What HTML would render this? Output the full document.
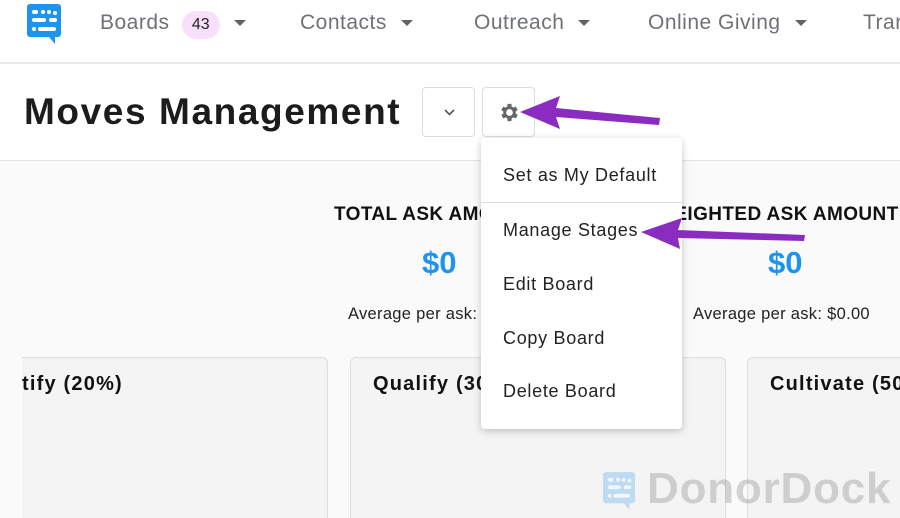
<!DOCTYPE html>
<html><head><style>
*{margin:0;padding:0;box-sizing:border-box}
html,body{width:900px;height:518px;overflow:hidden}
body{background:#fafafa;font-family:"Liberation Sans",sans-serif;position:relative}
.a{position:absolute;white-space:nowrap}
.nav{color:#6e7175;font-size:21px;top:10px;letter-spacing:.5px}
.car{display:inline-block;width:0;height:0;border-left:6px solid transparent;border-right:6px solid transparent;border-top:6px solid #5f6266;margin-left:14px;vertical-align:middle}
.col{position:absolute;top:357px;height:161px;background:#f4f4f4;border:1.5px solid #ddd;border-bottom:none;border-radius:6px 6px 0 0}
.ct{font-size:20px;font-weight:bold;color:#111;top:373px;letter-spacing:1.2px}
.st{font-size:19px;font-weight:bold;color:#111;top:204px;letter-spacing:.4px}
.big{font-size:31px;font-weight:bold;color:#1d94f0;top:245px}
.avg{font-size:16.5px;color:#222;top:305px;letter-spacing:.3px}
.mi{font-size:18px;color:#222;left:503px;letter-spacing:.7px}
</style></head><body>
<div class="a" style="left:0;top:0;width:900px;height:64px;background:#fff;border-bottom:2px solid #e8e8ea"></div>
<div class="a" style="left:0;top:64px;width:900px;height:97px;background:#fff;border-bottom:1px solid #e3e3e3"></div>
<svg class="a" style="left:27px;top:4px" width="34" height="40" viewBox="0 0 34 40"><path d="M3 0h28a3 3 0 0 1 3 3v27a3 3 0 0 1-3 3h-3v7l-6-7H3a3 3 0 0 1-3-3V3a3 3 0 0 1 3-3z" fill="#1d94f0"/><g fill="#fff"><rect x="5" y="6" width="6" height="4" rx="2"/><circle cx="16" cy="8" r="2"/><circle cx="22" cy="8" r="2"/><circle cx="28" cy="9" r="2"/><rect x="5" y="14" width="14" height="4" rx="2"/><rect x="22" y="14" width="8" height="4" rx="2"/><circle cx="7" cy="25" r="2"/><rect x="11" y="23" width="18" height="4" rx="2"/></g></svg>
<div class="a nav" style="left:100px;top:11px">Boards <span style="display:inline-block;background:#f8dffb;color:#222;border-radius:14px;font-size:16px;padding:5px 10px;margin-left:6px;letter-spacing:0">43</span><span class="car"></span></div>
<div class="a nav" style="left:300px;top:11px">Contacts<span class="car"></span></div>
<div class="a nav" style="left:474px;top:11px">Outreach<span class="car"></span></div>
<div class="a nav" style="left:648px;top:11px">Online Giving<span class="car"></span></div>
<div class="a nav" style="left:863px;top:11px">Tran</div>
<div class="a" style="left:24px;top:91px;font-size:37px;font-weight:bold;color:#1c1c1c;letter-spacing:1.6px">Moves Management</div>
<div class="a" style="left:422px;top:87px;width:53px;height:50px;border:1px solid #ddd;border-radius:4px;background:#fff"><svg style="position:absolute;left:21px;top:21px" width="11" height="7"><path d="M1 1l4.5 4.5L10 1" stroke="#555" stroke-width="1.6" fill="none"/></svg></div>
<div class="a" style="left:482px;top:87px;width:53px;height:50px;border:1px solid #ddd;border-radius:4px;background:#fff"><svg style="position:absolute;left:15px;top:13px" width="23" height="23" viewBox="0 0 24 24"><path fill="#666" d="M19.4 13a7.5 7.5 0 0 0 0-2l2.1-1.6-2-3.5-2.5 1a7 7 0 0 0-1.7-1L15 3h-4l-.4 2.9a7 7 0 0 0-1.7 1l-2.5-1-2 3.5L6.6 11a7.5 7.5 0 0 0 0 2l-2.1 1.6 2 3.5 2.5-1a7 7 0 0 0 1.7 1L11 21h4l.4-2.9a7 7 0 0 0 1.7-1l2.5 1 2-3.5zM13 15.5a3.5 3.5 0 1 1 0-7 3.5 3.5 0 0 1 0 7z" transform="translate(-1 0)"/></svg></div>
<div class="a st" style="left:334px">TOTAL ASK AMOUNT</div>
<div class="a big" style="left:422px">$0</div>
<div class="a avg" style="left:348px">Average per ask: $0.00</div>
<div class="a st" style="left:656px">WEIGHTED ASK AMOUNT</div>
<div class="a big" style="left:768px">$0</div>
<div class="a avg" style="left:693px">Average per ask: $0.00</div>
<div class="col" style="left:-20px;width:348px"></div>
<div class="col" style="left:350px;width:376px"></div>
<div class="col" style="left:747px;width:200px"></div>
<div class="a" style="left:0;top:340px;width:22px;height:178px;background:#fafafa"></div>
<div class="a ct" style="left:22px">tify (20%)</div>
<div class="a ct" style="left:373px">Qualify (30%)</div>
<div class="a ct" style="left:770px">Cultivate (50%)</div>
<div class="a" style="left:481px;top:138px;width:201px;height:291px;background:#fff;border-radius:4px;box-shadow:0 2px 8px rgba(0,0,0,.22)"></div>
<div class="a" style="left:481px;top:202px;width:201px;height:1px;background:#ddd"></div>
<div class="a mi" style="top:165px">Set as My Default</div>
<div class="a mi" style="top:220px">Manage Stages</div>
<div class="a mi" style="top:274px">Edit Board</div>
<div class="a mi" style="top:328px">Copy Board</div>
<div class="a mi" style="top:381px">Delete Board</div>
<svg class="a" style="left:0;top:0" width="900" height="518"><g fill="#8a2cc0"><path d="M520 112 L560 96 L556 108 L660 118 L659 125 L556 117 L560 129Z"/><path d="M641 232 L682 218 L678 230 L805 235 L804 241 L678 238 L680 249Z"/></g></svg>
<svg class="a" style="left:603px;top:472px;opacity:.25" width="32" height="38" viewBox="0 0 34 40"><path d="M3 0h28a3 3 0 0 1 3 3v27a3 3 0 0 1-3 3h-3v7l-6-7H3a3 3 0 0 1-3-3V3a3 3 0 0 1 3-3z" fill="#1d94f0"/><g fill="#fff"><rect x="5" y="6" width="6" height="4" rx="2"/><circle cx="16" cy="8" r="2"/><circle cx="22" cy="8" r="2"/><circle cx="28" cy="9" r="2"/><rect x="5" y="14" width="14" height="4" rx="2"/><rect x="22" y="14" width="8" height="4" rx="2"/><circle cx="7" cy="25" r="2"/><rect x="11" y="23" width="18" height="4" rx="2"/></g></svg>
<div class="a" style="left:647px;top:464px;font-size:44px;font-weight:bold;color:rgba(120,120,120,.3);letter-spacing:.8px">DonorDock</div>
</body></html>
